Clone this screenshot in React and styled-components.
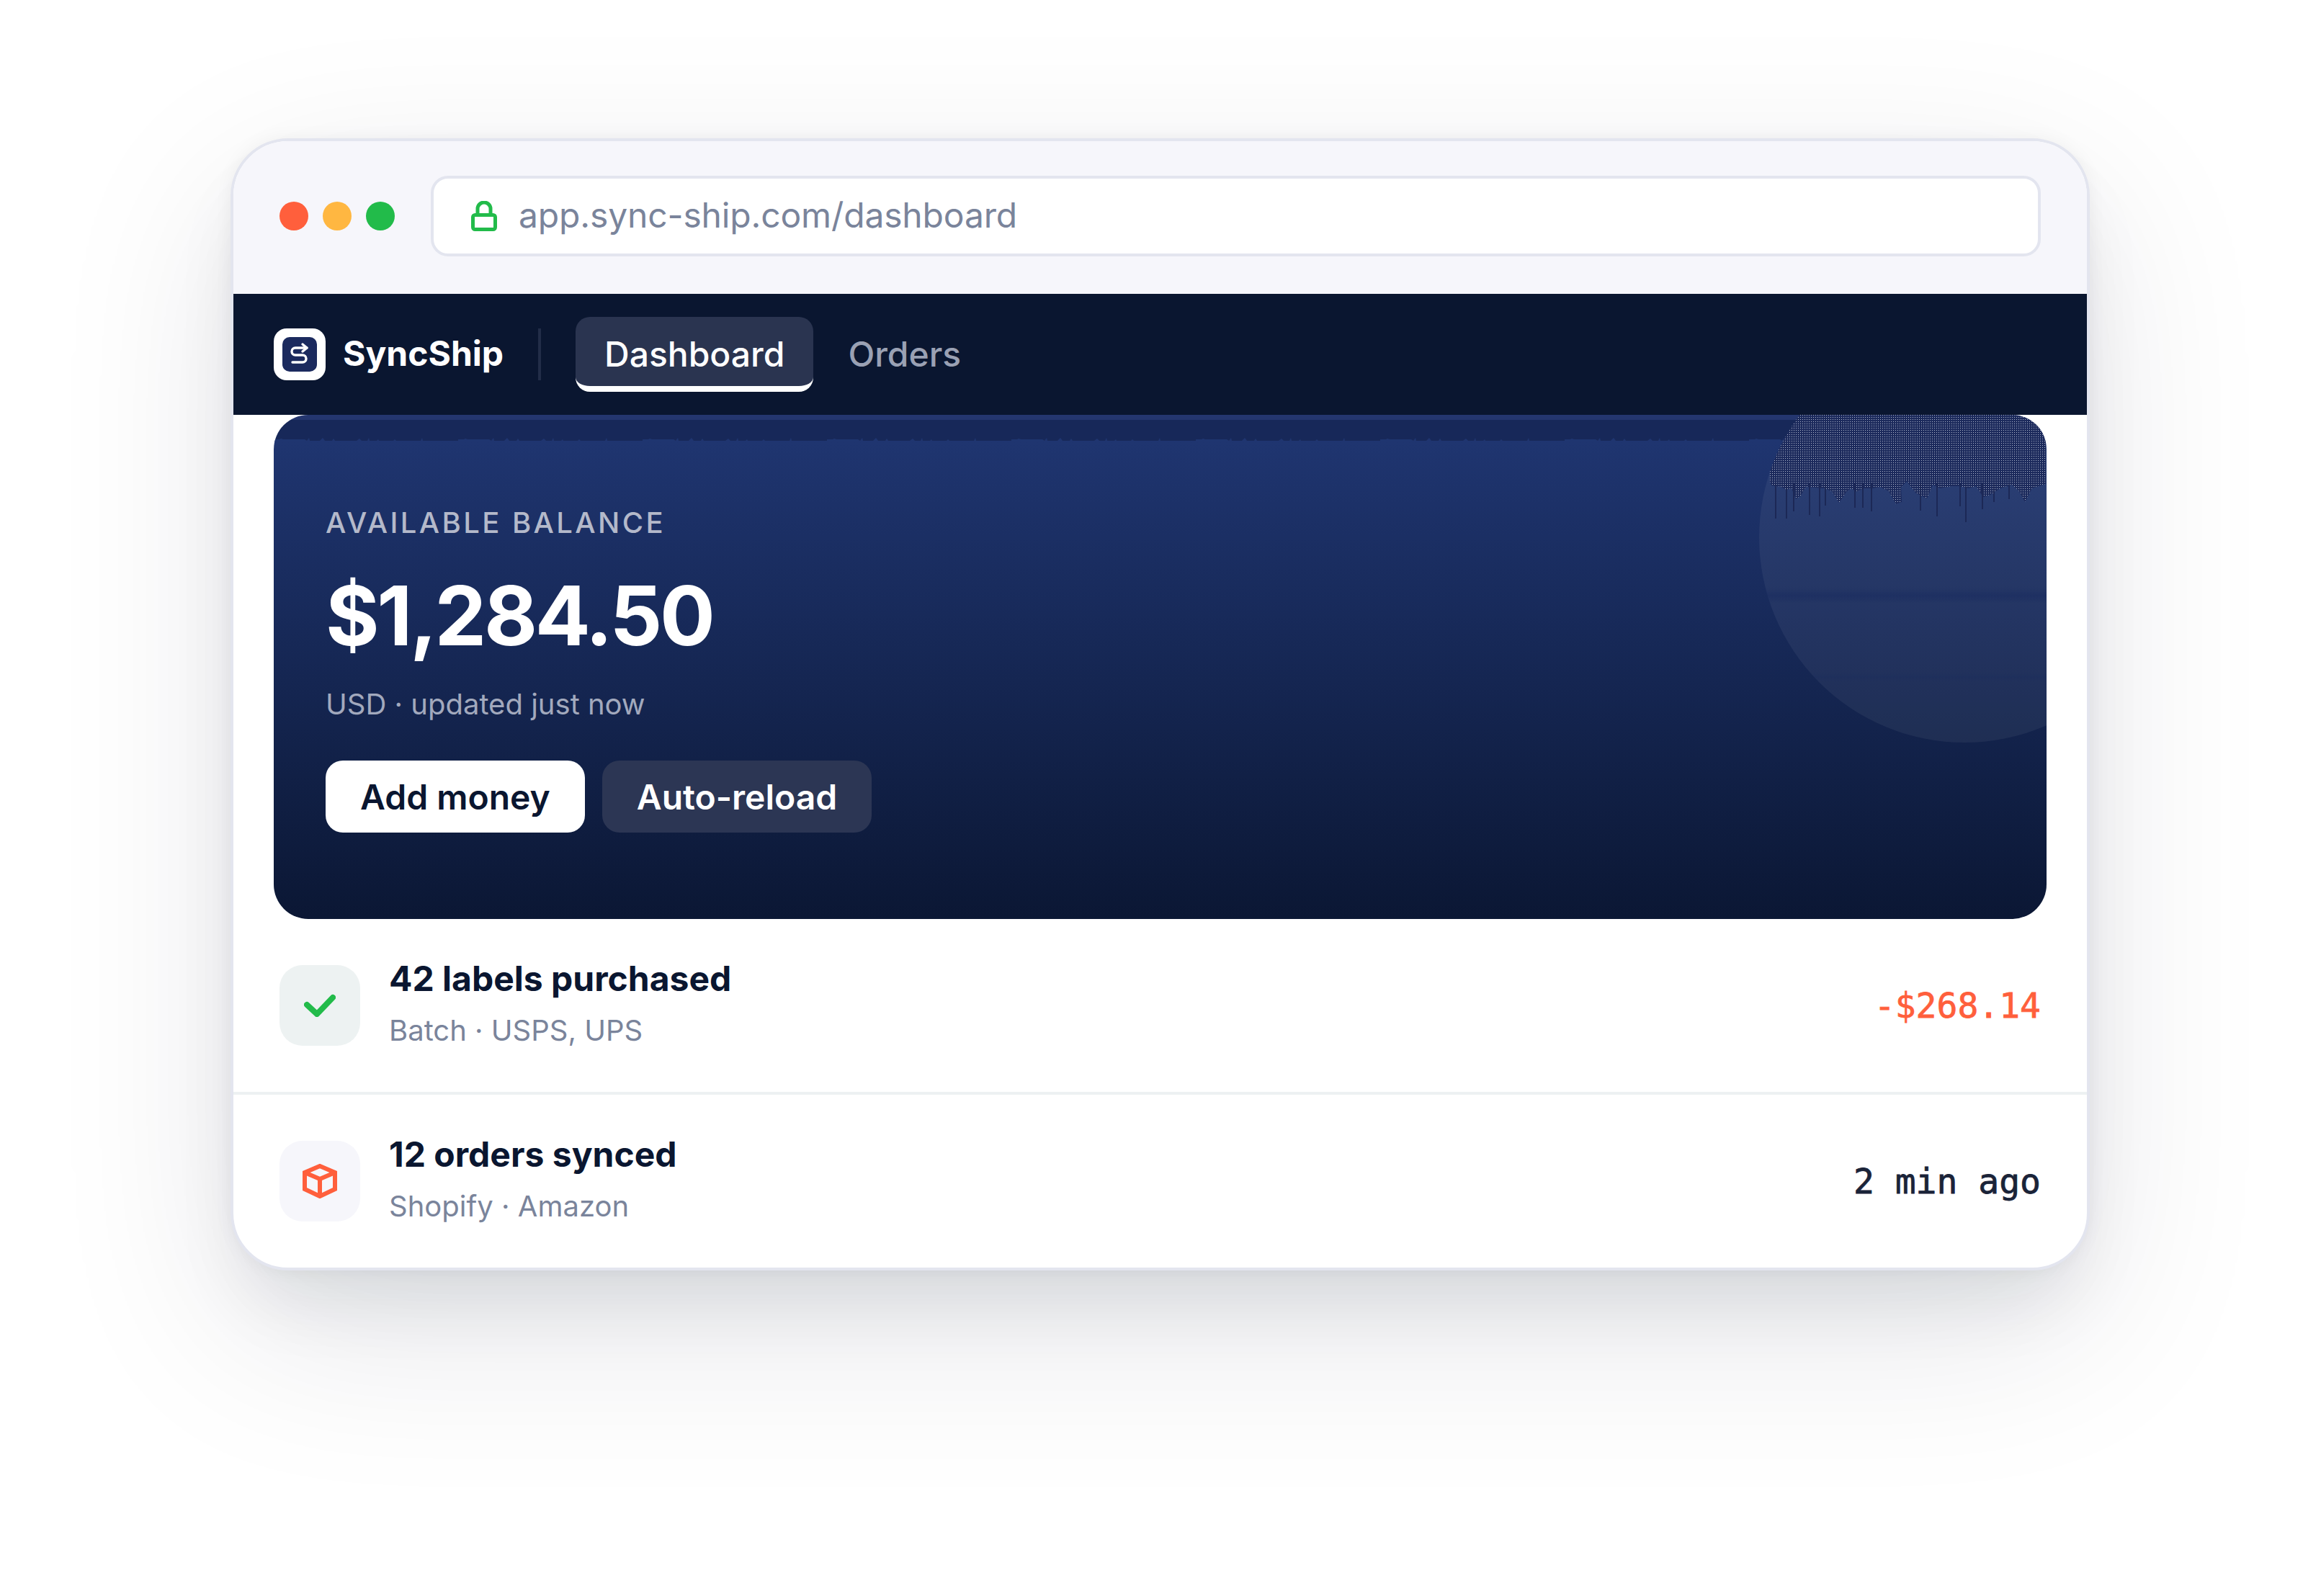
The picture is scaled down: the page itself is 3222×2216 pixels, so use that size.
import React from "react";
import styled, { createGlobalStyle } from "styled-components";

const GlobalStyle = createGlobalStyle`
  html, body {
    margin: 0;
    background: #fff;
    font-family: Inter, "Noto Sans", sans-serif;
    -webkit-font-smoothing: antialiased;
  }
`;

const Page = styled.div`
  width: 3222px;
  height: 2216px;
  box-sizing: border-box;
  padding: 192px 321px 0 320px;
  overflow: hidden;
`;

const BrowserWindow = styled.div`
  box-sizing: border-box;
  height: 1572px;
  border: 4px solid #e3e5ef;
  border-radius: 80px;
  background: #fff;
  overflow: hidden;
  box-shadow:
    0 0 24px rgba(10, 22, 48, 0.05),
    0 60px 100px -20px rgba(10, 22, 48, 0.09),
    0 80px 280px rgba(10, 22, 48, 0.11);
`;

const TitleBar = styled.div`
  box-sizing: border-box;
  height: 212px;
  padding: 0 64px 4px;
  background: #f6f6fb;
  display: flex;
  align-items: center;
  gap: 50px;
`;

const Dots = styled.div`
  display: flex;
  gap: 20px;
`;

const Dot = styled.span`
  width: 40px;
  height: 40px;
  border-radius: 50%;
  background: ${(p) => p.color};
`;

const AddressBar = styled.div`
  box-sizing: border-box;
  flex: 1;
  height: 112px;
  padding: 0 52px;
  background: #fff;
  border: 4px solid #e3e5ef;
  border-radius: 24px;
  display: flex;
  align-items: center;
  gap: 30px;
  font-size: 48px;
  letter-spacing: -0.15px;
  color: #7a849b;
`;

const AddressText = styled.span`
  padding-bottom: 3px;
`;

const NavBar = styled.nav`
  box-sizing: border-box;
  height: 168px;
  padding: 0 56px;
  background: #0a1630;
  display: flex;
  align-items: center;
`;

const LogoTile = styled.div`
  width: 72px;
  height: 72px;
  border-radius: 18px;
  background: #fff;
  display: flex;
  align-items: center;
  justify-content: center;
`;

const LogoInner = styled.div`
  width: 48px;
  height: 48px;
  border-radius: 10px;
  background: #1b2a5e;
`;

const Brand = styled.span`
  margin-left: 24px;
  padding-bottom: 3px;
  font-size: 48px;
  font-weight: 700;
  color: #fff;
`;

const NavDivider = styled.span`
  width: 4px;
  height: 72px;
  margin: 0 48px;
  background: #222d48;
`;

const Tab = styled.a`
  box-sizing: border-box;
  height: 104px;
  padding: 6px 40px 0;
  margin-right: 8px;
  display: flex;
  align-items: center;
  border-radius: 20px;
  font-size: 48px;
  font-weight: 500;
  color: ${(p) => (p.$active ? "#fff" : "#9aa1b4")};
  background: ${(p) => (p.$active ? "#2a3450" : "transparent")};
  border-bottom: 8px solid ${(p) => (p.$active ? "#fff" : "transparent")};
`;

const Content = styled.div`
  padding: 0 56px;
`;

const Hero = styled.section`
  position: relative;
  box-sizing: border-box;
  height: 700px;
  padding: 124px 72px 0;
  border-radius: 48px;
  overflow: hidden;
  background: linear-gradient(
    180deg,
    #24366f 0,
    #24366f 7px,
    #172859 7px,
    #172859 36px,
    #1f3570 36px,
    #0b1734 100%
  );
`;

const RaggedEdge = styled.svg`
  position: absolute;
  left: 0;
  top: 28px;
`;

const HeroArt = styled.svg`
  position: absolute;
  right: 0;
  top: 0;
`;

const HeroBody = styled.div`
  position: relative;
`;

const Eyebrow = styled.div`
  font-size: 40px;
  line-height: 52px;
  font-weight: 500;
  letter-spacing: 0.085em;
  color: #b4b9ca;
`;

const Amount = styled.div`
  margin-top: 38px;
  font-size: 114px;
  line-height: 130px;
  font-weight: 700;
  letter-spacing: -0.03em;
  color: #fff;
`;

const Updated = styled.div`
  margin-top: 32px;
  font-size: 40px;
  line-height: 52px;
  color: #a2a9bd;
`;

const Actions = styled.div`
  margin-top: 52px;
  display: flex;
  gap: 24px;
`;

const Button = styled.button`
  box-sizing: border-box;
  height: 100px;
  padding: 0 48px;
  border: 0;
  border-radius: 24px;
  font-family: inherit;
  font-size: 48px;
  font-weight: 600;
  color: ${(p) => (p.$primary ? "#0a1630" : "#fff")};
  background: ${(p) => (p.$primary ? "#fff" : "#2c3654")};
`;

const Row = styled.div`
  box-sizing: border-box;
  height: ${(p) => (p.$last ? "240px" : "244px")};
  padding: 0 64px;
  display: flex;
  align-items: center;
  border-bottom: ${(p) => (p.$last ? "0" : "4px solid #edf1f2")};
`;

const RowIcon = styled.div`
  width: 112px;
  height: 112px;
  border-radius: 32px;
  background: ${(p) => p.$bg};
  display: flex;
  align-items: center;
  justify-content: center;
`;

const RowText = styled.div`
  flex: 1;
  margin-left: 40px;
  padding-bottom: 8px;
`;

const RowTitle = styled.div`
  font-size: 48px;
  line-height: 64px;
  font-weight: 700;
  color: #0a1630;
`;

const RowSub = styled.div`
  margin-top: 14px;
  font-size: 40px;
  line-height: 52px;
  color: #7a849b;
`;

const RowValue = styled.div`
  font-family: "DejaVu Sans Mono", "Liberation Mono", monospace;
  font-size: 48px;
  -webkit-text-stroke: 0.8px ${(p) => p.$color};
  color: ${(p) => p.$color};
`;

// outline of the speckled patch, read off the reference at 3x (x, y)
const patch = [
  [170, 355], [178, 372], [215, 378], [240, 390], [262, 385], [280, 430], [300, 415], [320, 378],
  [355, 380], [395, 385], [430, 395], [460, 445], [490, 400], [510, 385], [530, 400], [560, 385],
  [600, 385], [630, 378], [665, 395], [695, 450], [720, 440], [718, 380], [740, 355], [755, 375],
  [780, 405], [825, 425], [850, 370], [880, 385], [930, 375], [960, 375], [1000, 385], [1030, 375],
  [1060, 420], [1090, 410], [1130, 385], [1180, 370], [1210, 395], [1232, 440], [1262, 385],
  [1320, 365], [1320, 78], [170, 78],
];

const drips = [
  [195, 510], [240, 510], [270, 480], [335, 495], [378, 500], [403, 455], [525, 465], [558, 465],
  [595, 480], [797, 478], [867, 500], [962, 460], [988, 525], [1055, 470], [1105, 440], [1168, 430],
];

const artX = (x) => Math.round(x / 3 - 42);
const artY = (y) => Math.round(y / 3 - 26);
const patchPoints = patch.map(([x, y]) => `${artX(x)},${artY(y)}`).join(" ");

const App = () => (
  <Page>
    <GlobalStyle />
    <BrowserWindow>
      <TitleBar>
        <Dots>
          <Dot color="#ff5f3c" />
          <Dot color="#ffb741" />
          <Dot color="#22bb4a" />
        </Dots>
        <AddressBar>
          <svg width="36" height="42" viewBox="0 0 36 42" fill="none" stroke="#22bb4a" strokeWidth="5">
            <path d="M9 20V11a9 9 0 0 1 18 0v9" />
            <rect x="2.5" y="19.5" width="31" height="20" rx="3" />
          </svg>
          <AddressText>app.sync-ship.com/dashboard</AddressText>
        </AddressBar>
      </TitleBar>

      <NavBar>
        <LogoTile>
          <LogoInner>
            <svg width="48" height="48" viewBox="0 0 48 48" fill="none" stroke="#fff" strokeWidth="3.4" strokeLinecap="round" strokeLinejoin="round">
              <path d="M14 35h14a5 5 0 0 0 0-10H18a5 5 0 0 1 0-10h16" />
              <path d="M28 10l6 5-6 5" />
            </svg>
          </LogoInner>
        </LogoTile>
        <Brand>SyncShip</Brand>
        <NavDivider />
        <Tab $active>Dashboard</Tab>
        <Tab>Orders</Tab>
      </NavBar>

      <Content>
        <Hero>
          <RaggedEdge width="2100" height="10">
            <defs>
              <pattern id="rag" width="256" height="10" patternUnits="userSpaceOnUse">
                <path
                  d="M0 6h8l2-1 3 1h30l3 2 3-4 1 4h14l4-4 3 4h10l2-3 2 3h30l4-3 3 3h8l2-4 1 4h10l2-2 1 2h20l2-2 2 2h34l2-4 1 4h20v4H0z"
                  fill="#1f3570"
                />
              </pattern>
            </defs>
            <rect width="2100" height="10" fill="url(#rag)" />
          </RaggedEdge>
          <HeroArt width="399" height="456" viewBox="0 0 399 456">
            <defs>
              <clipPath id="disc">
                <circle cx="285" cy="170" r="285" />
              </clipPath>
              <pattern id="speckle" width="3" height="3" patternUnits="userSpaceOnUse">
                <rect width="1" height="1" fill="#b0b8cc" />
              </pattern>
              <linearGradient id="streak" x1="0" y1="0" x2="0" y2="1">
                <stop offset="0" stopColor="#14265e" stopOpacity="0" />
                <stop offset="0.5" stopColor="#14265e" stopOpacity="0.4" />
                <stop offset="1" stopColor="#14265e" stopOpacity="0" />
              </linearGradient>
            </defs>
            <circle cx="285" cy="170" r="285" fill="#fff" fillOpacity="0.055" />
            <g clipPath="url(#disc)">
              <polygon points={patchPoints} fill="#1c2a5c" />
              <polygon points={patchPoints} fill="url(#speckle)" />
              {drips.map(([x, y]) => (
                <rect key={x} x={artX(x) - 1} y="95" width="2" height={artY(y) - 95} fill="#1c2856" />
              ))}
              <rect x="0" y="240" width="399" height="22" fill="url(#streak)" />
              <rect x="0" y="358" width="399" height="12" fill="url(#streak)" opacity="0.5" />
            </g>
          </HeroArt>
          <HeroBody>
            <Eyebrow>AVAILABLE BALANCE</Eyebrow>
            <Amount>$1,284.50</Amount>
            <Updated>USD · updated just now</Updated>
            <Actions>
              <Button $primary>Add money</Button>
              <Button>Auto-reload</Button>
            </Actions>
          </HeroBody>
        </Hero>
      </Content>

      <Row>
        <RowIcon $bg="#edf2f2">
          <svg width="44" height="32" viewBox="0 0 44 32" fill="none" stroke="#22bb4a" strokeWidth="8" strokeLinecap="round" strokeLinejoin="round">
            <path d="M4 15l14 13L40 5" />
          </svg>
        </RowIcon>
        <RowText>
          <RowTitle>42 labels purchased</RowTitle>
          <RowSub>Batch · USPS, UPS</RowSub>
        </RowText>
        <RowValue $color="#ff5f3c">-$268.14</RowValue>
      </Row>
      <Row $last>
        <RowIcon $bg="#f6f6fb">
          <svg width="48" height="48" viewBox="0 0 48 48" fill="none" stroke="#ff5f3c" strokeWidth="6" strokeLinejoin="miter">
            <path d="M24 3L45 12v23L24 45 3 35V12z" />
            <path d="M3 12l21 9 21-9M24 21v24" />
          </svg>
        </RowIcon>
        <RowText>
          <RowTitle>12 orders synced</RowTitle>
          <RowSub>Shopify · Amazon</RowSub>
        </RowText>
        <RowValue $color="#1a2338">2 min ago</RowValue>
      </Row>
    </BrowserWindow>
  </Page>
);

export default App;
